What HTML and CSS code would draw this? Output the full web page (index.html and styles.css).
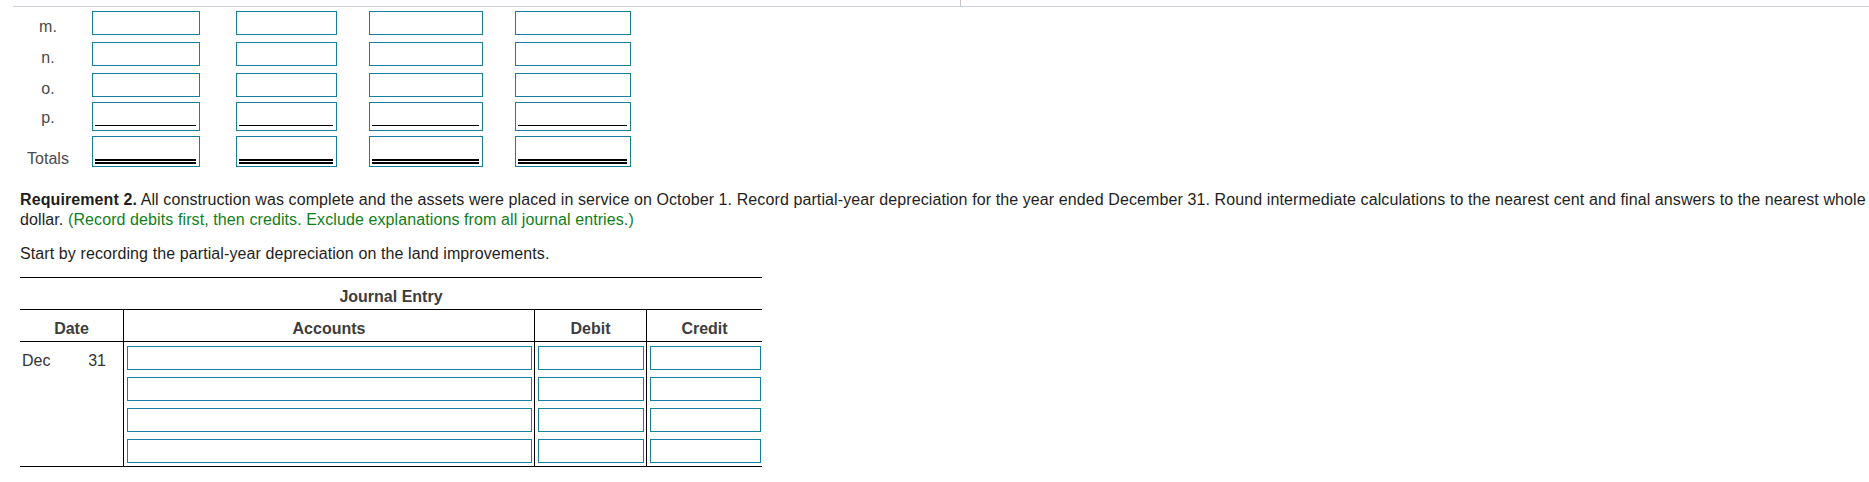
FILE: index.html
```html
<!DOCTYPE html>
<html lang="en">
<head>
<meta charset="utf-8">
<title>Requirement 2</title>
<link rel="stylesheet" href="styles.css">
</head>
<body>
<div class="topbar"><div class="topbar-left"></div></div>

<div class="rows">
  <div class="row">
    <div class="lbl">m.</div>
    <input class="fld w1" type="text"><input class="fld w2" type="text"><input class="fld w3" type="text"><input class="fld w4" type="text">
  </div>
  <div class="row">
    <div class="lbl">n.</div>
    <input class="fld w1" type="text"><input class="fld w2" type="text"><input class="fld w3" type="text"><input class="fld w4" type="text">
  </div>
  <div class="row">
    <div class="lbl">o.</div>
    <input class="fld w1" type="text"><input class="fld w2" type="text"><input class="fld w3" type="text"><input class="fld w4" type="text">
  </div>
  <div class="row row-p">
    <div class="lbl lbl-p">p.</div>
    <div class="fld ul w1"><div class="single"></div></div>
    <div class="fld ul w2"><div class="single"></div></div>
    <div class="fld ul w3"><div class="single"></div></div>
    <div class="fld ul w4"><div class="single"></div></div>
  </div>
  <div class="row row-t">
    <div class="lbl">Totals</div>
    <div class="fld dl w1"><div class="double"></div></div>
    <div class="fld dl w2"><div class="double"></div></div>
    <div class="fld dl w3"><div class="double"></div></div>
    <div class="fld dl w4"><div class="double"></div></div>
  </div>
</div>

<p class="req"><b>Requirement 2.</b> All construction was complete and the assets were placed in service on October 1. Record partial-year depreciation for the year ended December 31. Round intermediate calculations to the nearest cent and final answers to the nearest whole dollar. <span class="hint">(Record debits first, then credits. Exclude explanations from all journal entries.)</span></p>

<p class="start">Start by recording the partial-year depreciation on the land improvements.</p>

<div class="je">
  <div class="je-title">Journal Entry</div>
  <div class="je-head">
    <div class="c c-date">Date</div>
    <div class="c c-acc">Accounts</div>
    <div class="c c-deb">Debit</div>
    <div class="c c-cre">Credit</div>
  </div>
  <div class="je-body">
    <div class="c c-date date-cell"><span>Dec</span><span>31</span></div>
    <div class="c c-acc stack">
      <input class="fld" type="text"><input class="fld" type="text"><input class="fld" type="text"><input class="fld" type="text">
    </div>
    <div class="c c-deb stack">
      <input class="fld" type="text"><input class="fld" type="text"><input class="fld" type="text"><input class="fld" type="text">
    </div>
    <div class="c c-cre stack">
      <input class="fld" type="text"><input class="fld" type="text"><input class="fld" type="text"><input class="fld" type="text">
    </div>
  </div>
</div>
</body>
</html>
```

FILE: styles.css
```css
html, body {
  margin: 0;
  padding: 0;
  background: #fff;
  overflow: hidden;
}
body {
  font-family: "Liberation Sans", Arial, sans-serif;
  font-size: 16px;
  color: #222;
}

.topbar {
  margin-left: 13px;
  height: 6px;
  border-bottom: 1px solid #cbcfda;
}
.topbar-left {
  width: 947px;
  height: 6px;
  border-right: 1px solid #c4c4c4;
}

.rows {
  margin-left: 13px;
  margin-top: 4px;
  display: flex;
  flex-direction: column;
  gap: 7px;
}
.row {
  display: grid;
  grid-template-columns: 79px 144px 133px 146px 116px;
  align-items: end;
}
.row-p { margin-top: -2px; }
.row-t { margin-top: -2px; }

.lbl {
  width: 70px;
  text-align: center;
  line-height: 16px;
  color: #4a4a4a;
}
.lbl-p { margin-bottom: 5px; }

.fld {
  box-sizing: border-box;
  display: block;
  height: 24px;
  margin: 0;
  padding: 0;
  border: 1px solid #15809d;
  border-radius: 0;
  background: #fff;
  outline: none;
  font: inherit;
}
.w1 { width: 108px; }
.w2 { width: 101px; }
.w3 { width: 114px; }
.w4 { width: 116px; }

.ul {
  height: 29px;
  display: flex;
  flex-direction: column;
  justify-content: flex-end;
  padding: 0 3px 4px 2px;
}
.single { border-top: 1px solid #000; }

.dl {
  height: 31px;
  display: flex;
  flex-direction: column;
  justify-content: flex-end;
  padding: 0 3px 2px 2px;
}
.double {
  box-sizing: border-box;
  height: 5px;
  border-top: 2px solid #000;
  border-bottom: 2px solid #000;
}

.req {
  margin: 23px 0 0 20px;
  width: 1860px;
  line-height: 20px;
  letter-spacing: 0.1px;
  color: #1e1e1e;
}
.req b { font-weight: bold; }
.hint { color: #10801a; }

.start {
  margin: 14px 0 0 20px;
  line-height: 20px;
  letter-spacing: 0.1px;
  color: #1e1e1e;
}

.je {
  margin: 13px 0 0 20px;
  width: 742px;
  border-top: 1px solid #000;
  border-bottom: 1px solid #000;
  color: #3d3d3d;
}
.je-title {
  padding: 10px 0 3px;
  line-height: 18px;
  text-align: center;
  font-weight: bold;
  border-bottom: 1px solid #000;
}
.je-head, .je-body {
  display: grid;
  grid-template-columns: 104px 411px 112px 115px;
}
.je-head {
  border-bottom: 1px solid #000;
  font-weight: bold;
  text-align: center;
}
.je-head .c {
  padding: 10px 0 3px;
  line-height: 18px;
}
.c-date, .c-acc, .c-deb { border-right: 1px solid #000; }

.date-cell {
  display: flex;
  justify-content: space-between;
  align-items: flex-start;
  padding: 10px 17px 0 2px;
  line-height: 18px;
  color: #333;
}

.stack {
  display: flex;
  flex-direction: column;
  gap: 7px;
  padding: 4px 2px 3px 3px;
}
.c-cre.stack { padding-right: 1px; }
.stack .fld { width: 100%; }
```
